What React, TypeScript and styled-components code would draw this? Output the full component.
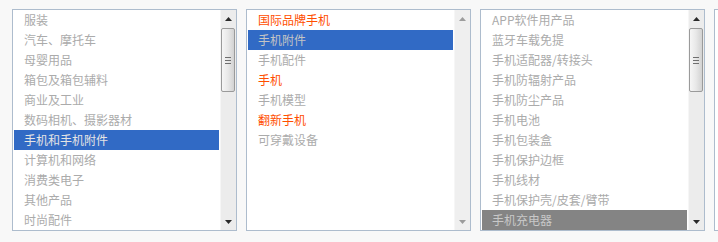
import styled, { createGlobalStyle, css } from "styled-components";

const GlobalStyle = createGlobalStyle`
  html, body {
    margin: 0;
    padding: 0;
    background: #f8f8f8;
    overflow: hidden;
  }
  body {
    font-family: "Noto Sans CJK SC", "Liberation Sans", sans-serif;
    font-size: 12px;
  }
`;

type Tone = "normal" | "hot";
type SelectStyle = "active" | "inactive" | "dim";

interface Item {
  label: string;
  tone?: Tone;
}

const Page = styled.div`
  display: flex;
  gap: 9px;
  padding: 9px 0 0 12px;
  width: 718px;
  height: 242px;
  box-sizing: border-box;
  overflow: hidden;
`;

const Box = styled.div`
  flex-shrink: 0;
  display: flex;
  width: 225px;
  height: 222px;
  box-sizing: border-box;
  border: 1px solid #adbccd;
  background: #fff;
`;

const List = styled.ul`
  list-style: none;
  margin: 0 1px 0 0;
  padding: 0 0 0 1px;
  width: 205px;
  height: 220px;
  overflow: hidden;
`;

const selectedLook = {
  active: css`
    background: #316ac5;
    color: #e4e4e4;
  `,
  dim: css`
    background: #316ac5;
    color: #c4c4c4;
  `,
  inactive: css`
    background: #848484;
    color: #c8c8c8;
  `,
};

const Row = styled.li<{ $tone: Tone; $selected?: SelectStyle }>`
  height: 20px;
  line-height: 20px;
  padding-left: 10px;
  white-space: nowrap;
  color: ${({ $tone }) => ($tone === "hot" ? "#ff4e00" : "#ababab")};
  ${({ $selected }) => $selected && selectedLook[$selected]}
`;

const Scrollbar = styled.div<{ $disabled?: boolean }>`
  display: flex;
  flex-direction: column;
  width: 16px;
  height: 220px;
  background: ${({ $disabled }) => ($disabled ? "#efefef" : "#ececec")};
  border-left: 1px solid #f6f6f6;
  box-sizing: border-box;
`;

const ArrowButton = styled.div`
  height: 17px;
  display: flex;
  align-items: center;
  justify-content: center;
  flex-shrink: 0;
`;

const Track = styled.div`
  flex: 1;
  padding-top: 1px;
`;

const Thumb = styled.div`
  width: 14px;
  height: 64px;
  box-sizing: border-box;
  border: 1px solid #9a9a9a;
  border-radius: 2px;
  background: linear-gradient(to right, #f6f6f6 0%, #e8e8e8 50%, #d2d2d2 100%);
  display: flex;
  align-items: center;
  justify-content: center;
`;

const Grip = styled.div`
  width: 6px;
  height: 7px;
  background: repeating-linear-gradient(
    to bottom,
    #6f6f6f 0px,
    #6f6f6f 1px,
    transparent 1px,
    transparent 3px
  );
`;

const Arrow = ({ up, color }: { up?: boolean; color: string }) => (
  <svg width="7" height="4" viewBox="0 0 7 4">
    <polygon points={up ? "3.5,0 7,4 0,4" : "0,0 7,0 3.5,4"} fill={color} />
  </svg>
);

const ListBox = ({
  items,
  selected,
  look,
  scrollable,
}: {
  items: Item[];
  selected?: number;
  look?: SelectStyle;
  scrollable: boolean;
}) => {
  const arrowColor = scrollable ? "#2a2a2a" : "#9c9c9c";
  return (
    <Box>
      <List>
        {items.map((it, i) => (
          <Row key={i} $tone={it.tone || "normal"} $selected={i === selected ? look : undefined}>
            {it.label}
          </Row>
        ))}
      </List>
      <Scrollbar $disabled={!scrollable}>
        <ArrowButton>
          <Arrow up color={arrowColor} />
        </ArrowButton>
        <Track>
          {scrollable && (
            <Thumb>
              <Grip />
            </Thumb>
          )}
        </Track>
        <ArrowButton>
          <Arrow color={arrowColor} />
        </ArrowButton>
      </Scrollbar>
    </Box>
  );
};

const categories: Item[] = [
  "服装",
  "汽车、摩托车",
  "母婴用品",
  "箱包及箱包辅料",
  "商业及工业",
  "数码相机、摄影器材",
  "手机和手机附件",
  "计算机和网络",
  "消费类电子",
  "其他产品",
  "时尚配件",
].map((label) => ({ label }));

const phones: Item[] = [
  { label: "国际品牌手机", tone: "hot" },
  { label: "手机附件" },
  { label: "手机配件" },
  { label: "手机", tone: "hot" },
  { label: "手机模型" },
  { label: "翻新手机", tone: "hot" },
  { label: "可穿戴设备" },
];

const accessories: Item[] = [
  "APP软件用产品",
  "蓝牙车载免提",
  "手机适配器/转接头",
  "手机防辐射产品",
  "手机防尘产品",
  "手机电池",
  "手机包装盒",
  "手机保护边框",
  "手机线材",
  "手机保护壳/皮套/臂带",
  "手机充电器",
].map((label) => ({ label }));

export default function App() {
  return (
    <>
      <GlobalStyle />
      <Page>
        <ListBox items={categories} selected={6} look="active" scrollable />
        <ListBox items={phones} selected={1} look="dim" scrollable={false} />
        <ListBox items={accessories} selected={10} look="inactive" scrollable />
        <ListBox items={[]} scrollable={false} />
      </Page>
    </>
  );
}
